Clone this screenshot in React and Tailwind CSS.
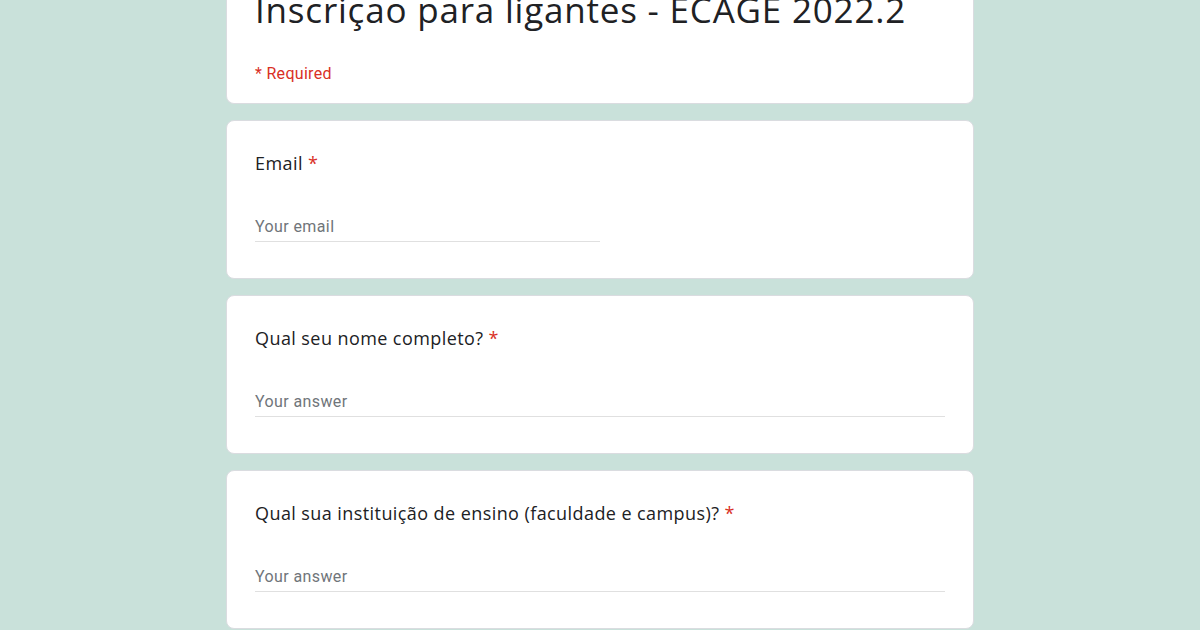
import React from "react";

const questions = [
  { label: "Email", placeholder: "Your email", short: true },
  { label: "Qual seu nome completo?", placeholder: "Your answer" },
  { label: "Qual sua instituição de ensino (faculdade e campus)?", placeholder: "Your answer" },
];

const QuestionCard = ({ label, placeholder, short }) => (
  <div className="w-[748px] bg-white rounded-lg border border-[#dadce0] px-7 pt-[30px] pb-[36px]">
    <div
      className="text-[18px] leading-6 text-[#202124] tracking-[0.42px]"
      style={{ fontFamily: '"Open Sans", sans-serif' }}
    >
      {label} <span className="text-[#d93025]">*</span>
    </div>
    <div className={`mt-[39px] ${short ? "w-[345px]" : "w-full"} border-b border-[#e0e0e0] pb-[2px]`}>
      <span
        className="text-[16px] leading-6 text-[#70757a] tracking-[0.4px]"
        style={{ fontFamily: "Roboto, sans-serif" }}
      >
        {placeholder}
      </span>
    </div>
  </div>
);

export default function App() {
  return (
    <div className="w-[1200px] h-[630px] overflow-hidden bg-[#c9e1da]">
      <div className="flex flex-col items-center gap-4">
        <div className="w-[748px] bg-white rounded-b-lg border border-t-0 border-[#dadce0] px-7 pb-[17px]">
          <h1
            className="-mt-[10px] text-[35px] leading-10 text-[#202124] tracking-[0.8px] whitespace-nowrap"
            style={{ fontFamily: '"Open Sans", sans-serif' }}
          >
            Inscriçao para ligantes - ECAGE 2022.2
          </h1>
          <p
            className="mt-[32px] text-[16px] leading-6 text-[#d93025] tracking-[0.3px]"
            style={{ fontFamily: "Roboto, sans-serif" }}
          >
            * Required
          </p>
        </div>
        {questions.map((q) => (
          <QuestionCard key={q.label} {...q} />
        ))}
      </div>
    </div>
  );
}
